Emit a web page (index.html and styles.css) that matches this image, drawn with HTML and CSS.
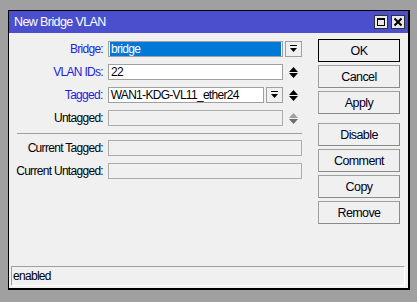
FILE: index.html
```html
<!DOCTYPE html>
<html lang="en">
<head>
    <meta charset="UTF-8">
    <title>New Bridge VLAN</title>
    <link rel="stylesheet" href="styles.css">
</head>
<body>
    <div class="window">
        <div class="titlebar">
            <span class="title">New Bridge VLAN</span>
            <div class="wbtns">
                <span class="wbtn">
                    <svg width="12" height="12" viewBox="0 0 12 12"><rect x="2.5" y="2.5" width="7" height="7" fill="none" stroke="#000" stroke-width="1"/><rect x="2" y="2" width="8" height="2" fill="#000"/></svg>
                </span>
                <span class="wbtn">
                    <svg width="12" height="12" viewBox="0 0 12 12"><path d="M2.5 2.5 L9.5 9.5 M9.5 2.5 L2.5 9.5" stroke="#000" stroke-width="2"/></svg>
                </span>
            </div>
        </div>

        <div class="content">
            <div class="form">
                <div class="row">
                    <span class="lbl req">Bridge:</span>
                    <div class="field sel"><span class="hl">bridge</span></div>
                    <span class="drop"><svg width="9" height="9" viewBox="0 0 9 9"><rect x="1" y="0" width="7" height="1" fill="#000"/><path d="M1 3 H8 L4.5 7 Z" fill="#000"/></svg></span>
                </div>
                <div class="row">
                    <span class="lbl req">VLAN IDs:</span>
                    <div class="field">22</div>
                    <span class="spin"><svg width="9" height="11" viewBox="0 0 9 11"><path d="M4.5 0 L9 5 H0 Z M0 6 H9 L4.5 11 Z" fill="#000"/></svg></span>
                </div>
                <div class="row">
                    <span class="lbl req">Tagged:</span>
                    <div class="field short">WAN1-KDG-VL11_ether24</div>
                    <span class="drop"><svg width="9" height="9" viewBox="0 0 9 9"><rect x="1" y="0" width="7" height="1" fill="#000"/><path d="M1 3 H8 L4.5 7 Z" fill="#000"/></svg></span>
                    <span class="spin"><svg width="9" height="11" viewBox="0 0 9 11"><path d="M4.5 0 L9 5 H0 Z M0 6 H9 L4.5 11 Z" fill="#000"/></svg></span>
                </div>
                <div class="row">
                    <span class="lbl">Untagged:</span>
                    <div class="field off"></div>
                    <span class="spin"><svg width="9" height="11" viewBox="0 0 9 11"><path d="M4.5 0 L9 5 H0 Z" fill="#a0a0a0"/><path d="M0 6 H9 L4.5 11 Z" fill="#6d6d6d"/></svg></span>
                </div>

                <div class="sep"></div>

                <div class="row">
                    <span class="lbl">Current Tagged:</span>
                    <div class="field off wide"></div>
                </div>
                <div class="row">
                    <span class="lbl">Current Untagged:</span>
                    <div class="field off wide"></div>
                </div>
            </div>

            <div class="actions">
                <button class="btn default">OK</button>
                <button class="btn">Cancel</button>
                <button class="btn">Apply</button>
                <button class="btn group">Disable</button>
                <button class="btn">Comment</button>
                <button class="btn">Copy</button>
                <button class="btn">Remove</button>
            </div>
        </div>

        <div class="status">enabled</div>
    </div>
</body>
</html>
```

FILE: styles.css
```css
* {
    box-sizing: border-box;
    margin: 0;
    padding: 0;
}

body {
    background: #a0a0a0;
    font-family: "Liberation Sans", Arial, sans-serif;
    font-size: 12px;
    letter-spacing: -0.7px;
    color: #000;
}

.window {
    margin: 10px 0 0 8px;
    width: 402px;
    height: 280px;
    background: #f0f0f0;
    border-top: 1px solid #000;
    border-left: 1px solid #000;
    border-right: 2px solid #000;
    border-bottom: 2px solid #000;
    display: flex;
    flex-direction: column;
}

/* title bar */
.titlebar {
    height: 22px;
    background: #4b4fcd;
    display: flex;
    align-items: center;
    justify-content: space-between;
    padding: 0 3px 0 5px;
}

.title {
    color: #fff;
    font-size: 12.5px;
    letter-spacing: -0.6px;
}

.wbtns {
    display: flex;
    gap: 3px;
}

.wbtn {
    width: 14px;
    height: 14px;
    background: #e8e8e8;
    border: 1px solid #303030;
    display: flex;
    align-items: center;
    justify-content: center;
}

/* content */
.content {
    display: flex;
    padding-top: 6px;
}

.form {
    width: 293px;
    padding-top: 2px;
    display: flex;
    flex-direction: column;
    gap: 7px;
}

.row {
    display: flex;
    align-items: center;
    height: 16px;
}

.lbl {
    width: 94px;
    margin-right: 5px;
    text-align: right;
    white-space: nowrap;
    color: #000;
}

.lbl.req {
    color: #2222dd;
}

.field {
    width: 175px;
    height: 16px;
    background: #fff;
    border: 1px solid #a0a0a0;
    padding: 0 2px;
    line-height: 14px;
    white-space: nowrap;
    overflow: hidden;
}

.field.short {
    width: 157px;
}

.field.wide {
    width: 194px;
}

.field.off {
    background: #f0f0f0;
    border-color: #acacac;
}

.field.sel {
    padding: 0 1px;
}

.hl {
    display: block;
    background: #0078d7;
    color: #fff;
    height: 14px;
    padding-left: 1px;
}

.drop {
    width: 17px;
    height: 16px;
    margin-left: 2px;
    border: 1px solid #a0a0a0;
    background: #f0f0f0;
    display: flex;
    align-items: center;
    justify-content: center;
}

.spin {
    width: 19px;
    height: 16px;
    display: flex;
    align-items: center;
    justify-content: center;
    padding-left: 2px;
}

.sep {
    height: 1px;
    margin: 0 0 -1px 8px;
    background: #a0a0a0;
    width: 285px;
}

/* buttons */
.actions {
    margin-left: 16px;
    display: flex;
    flex-direction: column;
    gap: 3px;
}

.btn {
    width: 82px;
    height: 23px;
    font-family: inherit;
    font-size: 12.5px;
    letter-spacing: -0.6px;
    color: #000020;
    background: #f0f0f0;
    border: 1px solid #a0a0a0;
    border-right-color: #8a8a8a;
    border-bottom-color: #8a8a8a;
}

.btn.default {
    border: 1px solid #000;
    box-shadow: inset 0 0 0 1px #f0f0f0;
}

.btn.group {
    margin-top: 6px;
}

/* status bar */
.status {
    margin: auto 3px 2px 2px;
    height: 20px;
    border-top: 1px solid #a0a0a0;
    border-left: 1px solid #a0a0a0;
    border-right: 1px solid #fff;
    border-bottom: 1px solid #fff;
    padding-left: 1px;
    line-height: 18px;
}
```
